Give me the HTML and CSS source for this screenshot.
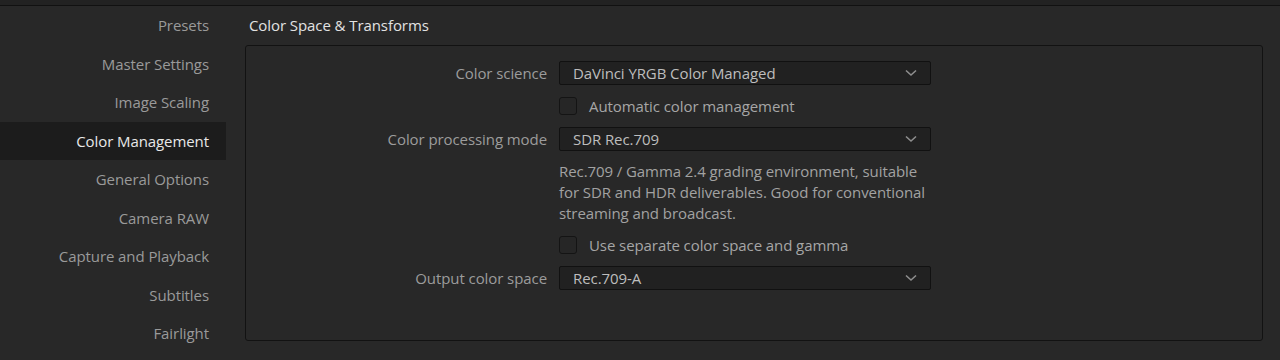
FILE: index.html
```html
<!DOCTYPE html>
<html lang="en">
<head>
    <meta charset="UTF-8">
    <title>Project Settings</title>
    <link rel="stylesheet" href="styles.css">
</head>
<body>

    <div class="topbar"></div>

    <div class="layout">
        <!-- Settings categories -->
        <div class="sidebar">
            <div class="nav-item">Presets</div>
            <div class="nav-item">Master Settings</div>
            <div class="nav-item">Image Scaling</div>
            <div class="nav-item active">Color Management</div>
            <div class="nav-item">General Options</div>
            <div class="nav-item">Camera RAW</div>
            <div class="nav-item">Capture and Playback</div>
            <div class="nav-item">Subtitles</div>
            <div class="nav-item">Fairlight</div>
        </div>

        <!-- Color management panel -->
        <div class="main">
            <div class="section-title">Color Space &amp; Transforms</div>

            <div class="panel">
                <div class="form">
                    <div class="label">Color science</div>
                    <div class="select">
                        <span>DaVinci YRGB Color Managed</span>
                        <svg class="chevron" width="12" height="8" viewBox="0 0 12 8"><path d="M1 1.5 L6 6 L11 1.5" fill="none" stroke="#8e8e8e" stroke-width="1.6"/></svg>
                    </div>

                    <div></div>
                    <label class="check">
                        <span class="box"></span>
                        <span>Automatic color management</span>
                    </label>

                    <div class="label">Color processing mode</div>
                    <div class="select">
                        <span>SDR Rec.709</span>
                        <svg class="chevron" width="12" height="8" viewBox="0 0 12 8"><path d="M1 1.5 L6 6 L11 1.5" fill="none" stroke="#8e8e8e" stroke-width="1.6"/></svg>
                    </div>

                    <div></div>
                    <div class="desc">Rec.709 / Gamma 2.4 grading environment, suitable for SDR and HDR deliverables. Good for conventional streaming and broadcast.</div>

                    <div></div>
                    <label class="check">
                        <span class="box"></span>
                        <span>Use separate color space and gamma</span>
                    </label>

                    <div class="label">Output color space</div>
                    <div class="select">
                        <span>Rec.709-A</span>
                        <svg class="chevron" width="12" height="8" viewBox="0 0 12 8"><path d="M1 1.5 L6 6 L11 1.5" fill="none" stroke="#8e8e8e" stroke-width="1.6"/></svg>
                    </div>
                </div>
            </div>
        </div>
    </div>

</body>
</html>
```

FILE: styles.css
```css
body {
    margin: 0;
    background-color: #282828;
    font-family: "Open Sans", "Liberation Sans", sans-serif;
    font-size: 15px;
    letter-spacing: -0.08px;
    color: #9c9c9c;
    height: 360px;
    overflow: hidden;
}

.topbar {
    height: 5px;
    background-color: #222222;
    border-bottom: 1px solid #111111;
}

.layout {
    display: flex;
}

.sidebar {
    width: 226px;
    flex-shrink: 0;
}

.nav-item {
    height: 38.5px;
    line-height: 38px;
    text-align: right;
    padding-right: 17px;
    color: #9a9a9a;
}

.nav-item.active {
    background-color: #1c1c1c;
    color: #e8e8e8;
}

.main {
    flex: 1;
    padding-left: 19px;
    padding-right: 17px;
}

.section-title {
    height: 39px;
    line-height: 38px;
    padding-left: 4px;
    color: #e2e2e2;
}

.panel {
    border: 1px solid #121212;
    border-radius: 3px;
    padding-top: 15px;
    box-sizing: border-box;
    height: 296px;
}

.form {
    display: grid;
    grid-template-columns: 301px 372px;
    column-gap: 12px;
    row-gap: 9px;
}

.label {
    height: 24px;
    line-height: 24px;
    text-align: right;
    color: #9c9c9c;
}

.select {
    height: 24px;
    box-sizing: border-box;
    background-color: #212121;
    border: 1px solid #111111;
    border-radius: 2px;
    display: flex;
    align-items: center;
    justify-content: space-between;
    padding: 0 13px;
    color: #bdbdbd;
}

.chevron {
    display: block;
}

.check {
    height: 24px;
    display: flex;
    align-items: center;
    gap: 12px;
    color: #a6a6a6;
}

.box {
    width: 18px;
    height: 18px;
    box-sizing: border-box;
    background-color: #262626;
    border: 1px solid #141414;
    border-radius: 3px;
}

.desc {
    line-height: 21px;
    padding-top: 1px;
    color: #a2a2a2;
}
```
